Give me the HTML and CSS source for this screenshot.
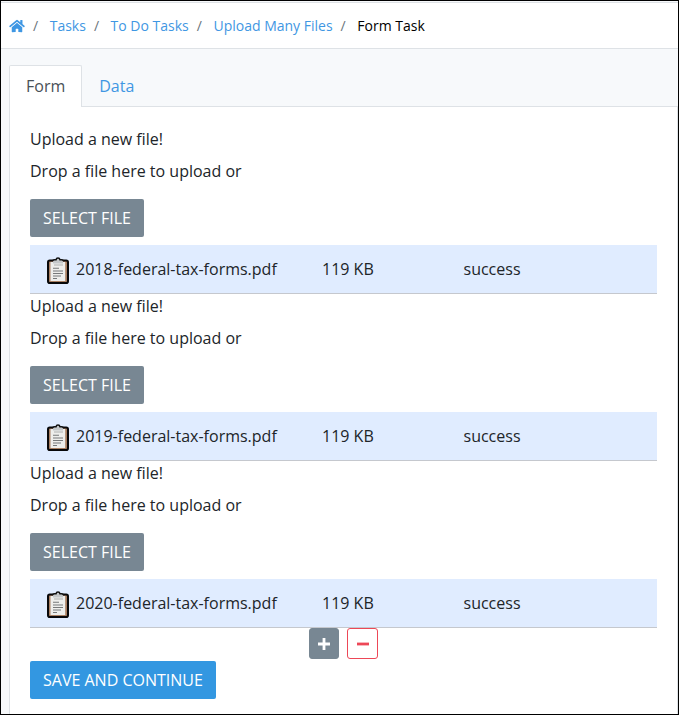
FILE: index.html
```html
<!DOCTYPE html>
<html lang="en">
<head>
<meta charset="utf-8">
<title>Form Task</title>
<link rel="stylesheet" href="styles.css">
</head>
<body>
<svg class="defs" width="0" height="0">
  <symbol id="clipboard" viewBox="0 0 24 28">
    <rect x="2" y="3.500" width="20" height="22.500" rx="1.800" fill="#a87f62" stroke="#08080a" stroke-width="2"/>
    <path d="M4.500 5h14.700v19H4.500z" fill="#eeeeec"/>
    <path d="M7 6.500V4q0-1.200 1.500-1.200H10Q10.300 1.200 12 1.200t2 1.600h1.500q1.500 0 1.500 1.200v2.500z" fill="#c4c7c9"/>
    <path d="M6.500 4Q7 2.800 8.500 2.800H10Q10.300 1 12 1t2 1.800h1.500q1.500 0 2 1.200" fill="none" stroke="#111" stroke-width="1.500"/>
    <path d="M8 8h9" stroke="#b9bbbb" stroke-width="1.200"/>
    <path d="M7 11.200h6M7 14h10M7 16.500h10M7 19h8M7 21.500h4" stroke="#77797a" stroke-width="1.100"/>
  </symbol>
</svg>
<div class="frame">
  <nav class="breadcrumb">
    <a href="#" class="home" aria-label="Home"><svg viewBox="0 0 576 512"><path fill="currentColor" d="M280.400 148.300L96 300.100V464a16 16 0 0 0 16 16l112-.3a16 16 0 0 0 16-16V368a16 16 0 0 1 16-16h64a16 16 0 0 1 16 16v95.600a16 16 0 0 0 16 16.100L464 480a16 16 0 0 0 16-16V300L295.700 148.300a12.200 12.200 0 0 0-15.300 0zM571.600 251.500L488 182.600V44.100a12 12 0 0 0-12-12h-56a12 12 0 0 0-12 12v72.600L318.500 43a48 48 0 0 0-61 0L4.300 251.500a12 12 0 0 0-1.600 16.900l25.500 31a12 12 0 0 0 16.900 1.600l235.300-193.700a12.200 12.200 0 0 1 15.300 0L530.900 301a12 12 0 0 0 16.900-1.600l25.500-31a12 12 0 0 0-1.700-16.900z"/></svg></a>
    <span class="sep">/</span><a href="#">Tasks</a>
    <span class="sep">/</span><a href="#">To Do Tasks</a>
    <span class="sep">/</span><a href="#">Upload Many Files</a>
    <span class="sep">/</span><span class="current">Form Task</span>
  </nav>
  <div class="tabs">
    <a class="tab active" href="#">Form</a>
    <a class="tab" href="#">Data</a>
  </div>
  <main class="card">
    <section class="upload">
      <p>Upload a new file!</p>
      <p>Drop a file here to upload or</p>
      <button class="btn secondary">SELECT FILE</button>
      <div class="file"><svg class="clip"><use href="#clipboard"/></svg><span class="name">2018-federal-tax-forms.pdf</span><span class="size">119 KB</span><span>success</span></div>
    </section>
    <section class="upload">
      <p>Upload a new file!</p>
      <p>Drop a file here to upload or</p>
      <button class="btn secondary">SELECT FILE</button>
      <div class="file"><svg class="clip"><use href="#clipboard"/></svg><span class="name">2019-federal-tax-forms.pdf</span><span class="size">119 KB</span><span>success</span></div>
    </section>
    <section class="upload">
      <p>Upload a new file!</p>
      <p>Drop a file here to upload or</p>
      <button class="btn secondary">SELECT FILE</button>
      <div class="file"><svg class="clip"><use href="#clipboard"/></svg><span class="name">2020-federal-tax-forms.pdf</span><span class="size">119 KB</span><span>success</span></div>
    </section>
    <div class="loop">
      <button class="mini add" aria-label="Add"><svg viewBox="0 0 14 14"><path d="M7 1v12M1 7h12"/></svg></button>
      <button class="mini remove" aria-label="Remove"><svg viewBox="0 0 14 14"><path d="M1 7h12"/></svg></button>
    </div>
    <button class="btn primary">SAVE AND CONTINUE</button>
  </main>
</div>
</body>
</html>
```
FILE: styles.css
```css
* { box-sizing: border-box; }
body {
  margin: 0;
  font: 16px/24px "Open Sans", sans-serif;
  color: #212529;
}
a { color: #3f97e3; text-decoration: none; }
p { margin: 0 0 8px; }
.defs { display: none; }
.frame {
  display: flex;
  flex-direction: column;
  height: 715px;
  border: 1px solid #000;
  background: #f7f9fb;
  overflow: hidden;
}
.breadcrumb {
  display: flex;
  align-items: center;
  flex: none;
  height: 47px;
  margin-top: 1px;
  padding: 0 8px;
  border-top: 1px solid #dee2e6;
  border-bottom: 1px solid #dee2e6;
  background: #fff;
  font-size: 14px;
  line-height: 21px;
}
.breadcrumb .home { display: flex; width: 16px; }
.home svg { width: 16px; height: 14px; }
.sep { width: 24.7px; padding-left: 8px; color: #6c757d; }
.current { color: #000; }
.tabs {
  display: flex;
  flex: none;
  height: 42px;
  margin: 16px 0 0 8px;
  border-bottom: 1px solid #dee2e6;
}
.tab {
  height: 41px;
  padding: 8px 16px;
  border: 1px solid transparent;
  border-bottom: 0;
}
.tab.active {
  height: 42px;
  color: #495057;
  background: #fff;
  border-color: #dee2e6;
  border-radius: 2px 2px 0 0;
}
.card {
  flex: 1;
  margin-left: 8px;
  padding: 20px;
  border: solid #dee2e6;
  border-width: 0 1px;
  background: #fff;
}
.upload { height: 167px; }
.btn {
  display: block;
  height: 38px;
  padding: 0 13px;
  border: 0;
  border-radius: 2px;
  color: #fff;
  font: inherit;
}
.secondary { margin-top: 16px; background: #788793; }
.primary { background: #3397e1; }
.upload p + p { margin-bottom: 0; }
.file {
  display: flex;
  align-items: center;
  height: 49px;
  margin-top: 8px;
  padding-left: 16px;
  border-bottom: 1px solid #c5c8ce;
  background: #e0ecff;
}
.clip { width: 24px; height: 28px; margin: 4px 6px 0 0; }
.name { width: 246px; }
.size { width: 141.5px; }
.loop {
  display: flex;
  justify-content: center;
  gap: 8px;
  height: 33px;
}
.mini {
  display: flex;
  align-items: center;
  justify-content: center;
  width: 30px;
  height: 31px;
  padding: 0;
  border: 1px solid #788793;
  border-radius: 3px;
  color: #fff;
  background: #788793;
}
.mini svg {
  width: 14px;
  height: 14px;
  fill: none;
  stroke: currentColor;
  stroke-width: 2.8;
}
.remove { width: 31px; color: #ed4757; background: #fff; border-color: #ed4757; }
```
